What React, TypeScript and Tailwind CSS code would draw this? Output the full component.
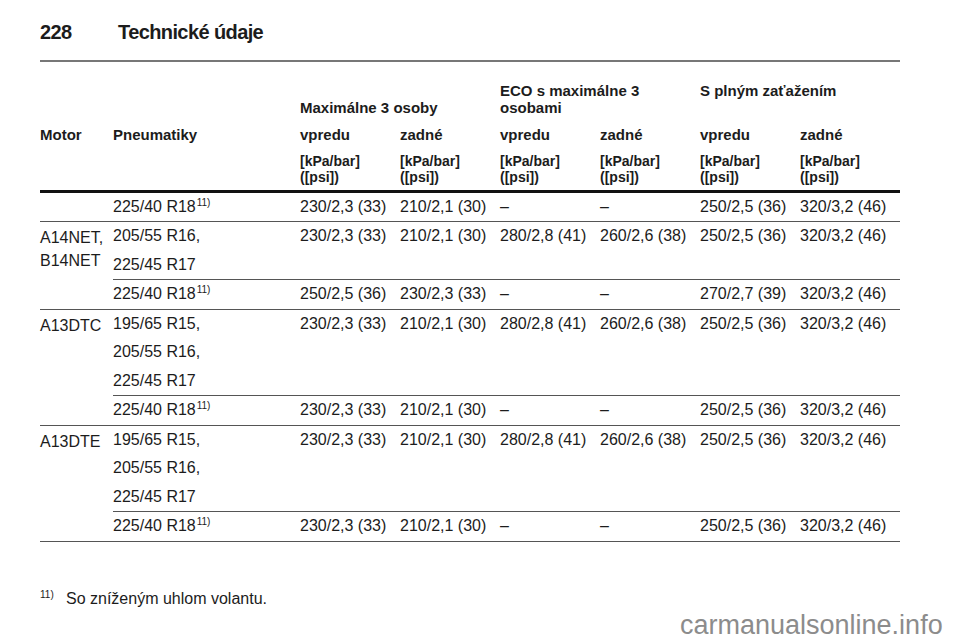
import React from "react";

type Sub = { tires: React.ReactNode[]; vals: string[] };
type Group = { motor: React.ReactNode[]; subs: Sub[] };

const Sup = () => (
  <span className="relative -top-[6px] text-[10px] leading-none ml-[1px]">11)</span>
);

const r18 = (
  <span>
    225/40 R18
    <Sup />
  </span>
);

const dash = ["–", "–"];

const groups: Group[] = [
  {
    motor: [],
    subs: [{ tires: [r18], vals: ["230/2,3 (33)", "210/2,1 (30)", ...dash, "250/2,5 (36)", "320/3,2 (46)"] }],
  },
  {
    motor: ["A14NET,", "B14NET"],
    subs: [
      {
        tires: ["205/55 R16,", "225/45 R17"],
        vals: ["230/2,3 (33)", "210/2,1 (30)", "280/2,8 (41)", "260/2,6 (38)", "250/2,5 (36)", "320/3,2 (46)"],
      },
      { tires: [r18], vals: ["250/2,5 (36)", "230/2,3 (33)", ...dash, "270/2,7 (39)", "320/3,2 (46)"] },
    ],
  },
  {
    motor: ["A13DTC"],
    subs: [
      {
        tires: ["195/65 R15,", "205/55 R16,", "225/45 R17"],
        vals: ["230/2,3 (33)", "210/2,1 (30)", "280/2,8 (41)", "260/2,6 (38)", "250/2,5 (36)", "320/3,2 (46)"],
      },
      { tires: [r18], vals: ["230/2,3 (33)", "210/2,1 (30)", ...dash, "250/2,5 (36)", "320/3,2 (46)"] },
    ],
  },
  {
    motor: ["A13DTE"],
    subs: [
      {
        tires: ["195/65 R15,", "205/55 R16,", "225/45 R17"],
        vals: ["230/2,3 (33)", "210/2,1 (30)", "280/2,8 (41)", "260/2,6 (38)", "250/2,5 (36)", "320/3,2 (46)"],
      },
      { tires: [r18], vals: ["230/2,3 (33)", "210/2,1 (30)", ...dash, "250/2,5 (36)", "320/3,2 (46)"] },
    ],
  },
];

export default function App() {
  return (
    <div className="relative w-[960px] h-[642px] bg-white text-[#1c1c1c] font-['Liberation_Sans',Arial,sans-serif] overflow-hidden">
      <div className="ml-[40px] w-[860px]">
        {/* page title */}
        <div className="flex pt-[20px] leading-[24px] text-[20px] font-bold tracking-[-0.6px]">
          <span className="w-[78px]">228</span>
          <span>Technické údaje</span>
        </div>
        <div className="mt-[16px] h-[1.5px] bg-[#777]" />

        {/* table header */}
        <div className="font-bold text-[15px]">
          <div className="grid grid-cols-[73px_187px_repeat(6,100px)] pt-[20px] leading-[17px]">
            <div />
            <div />
            <div className="col-span-2 self-end">Maximálne 3 osoby</div>
            <div className="col-span-2">
              ECO s maximálne 3<br />
              osobami
            </div>
            <div className="col-span-2">S plným zaťažením</div>
          </div>
          <div className="grid grid-cols-[73px_187px_repeat(6,100px)] mt-[10px] leading-[17px]">
            <div>Motor</div>
            <div>Pneumatiky</div>
            <div>vpredu</div>
            <div>zadné</div>
            <div>vpredu</div>
            <div>zadné</div>
            <div>vpredu</div>
            <div>zadné</div>
          </div>
          <div className="grid grid-cols-[73px_187px_repeat(6,100px)] mt-[10px] leading-[16px] text-[14px]">
            <div />
            <div />
            {[0, 1, 2, 3, 4, 5].map((i) => (
              <div key={i}>
                [kPa/bar]
                <br />
                ([psi])
              </div>
            ))}
          </div>
        </div>
        <div className="mt-[5px] h-[3px] bg-[#111]" />

        {/* table body */}
        <div className="text-[16px] leading-[28.5px]">
          {groups.map((g, gi) => (
            <div key={gi} className="flex border-b-[1.5px] border-[#555]">
              <div className="w-[73px] shrink-0 pt-[4px] leading-[23px]">
                {g.motor.map((m, mi) => (
                  <div key={mi}>{m}</div>
                ))}
              </div>
              <div className="flex-1 flex flex-col">
                {g.subs.map((s, si) => (
                  <div
                    key={si}
                    className={
                      si < g.subs.length - 1
                        ? "grid grid-cols-[187px_repeat(6,100px)] border-b-[1.5px] border-[#555]"
                        : "grid grid-cols-[187px_repeat(6,100px)]"
                    }
                  >
                    <div>
                      {s.tires.map((t, ti) => (
                        <div key={ti}>{t}</div>
                      ))}
                    </div>
                    {s.vals.map((v, vi) => (
                      <div key={vi} className="whitespace-nowrap">
                        {v}
                      </div>
                    ))}
                  </div>
                ))}
              </div>
            </div>
          ))}
        </div>

        {/* footnote */}
        <div className="mt-[47px] flex leading-[20px] text-[16px]">
          <span className="w-[26px] relative -top-[4px] text-[10px]">11)</span>
          <span>So zníženým uhlom volantu.</span>
        </div>
      </div>

      {/* watermark */}
      <div className="absolute left-[680px] top-[610px] text-[27px] leading-[30px] text-[#8c8c8c]">
        carmanualsonline.info
      </div>
    </div>
  );
}
